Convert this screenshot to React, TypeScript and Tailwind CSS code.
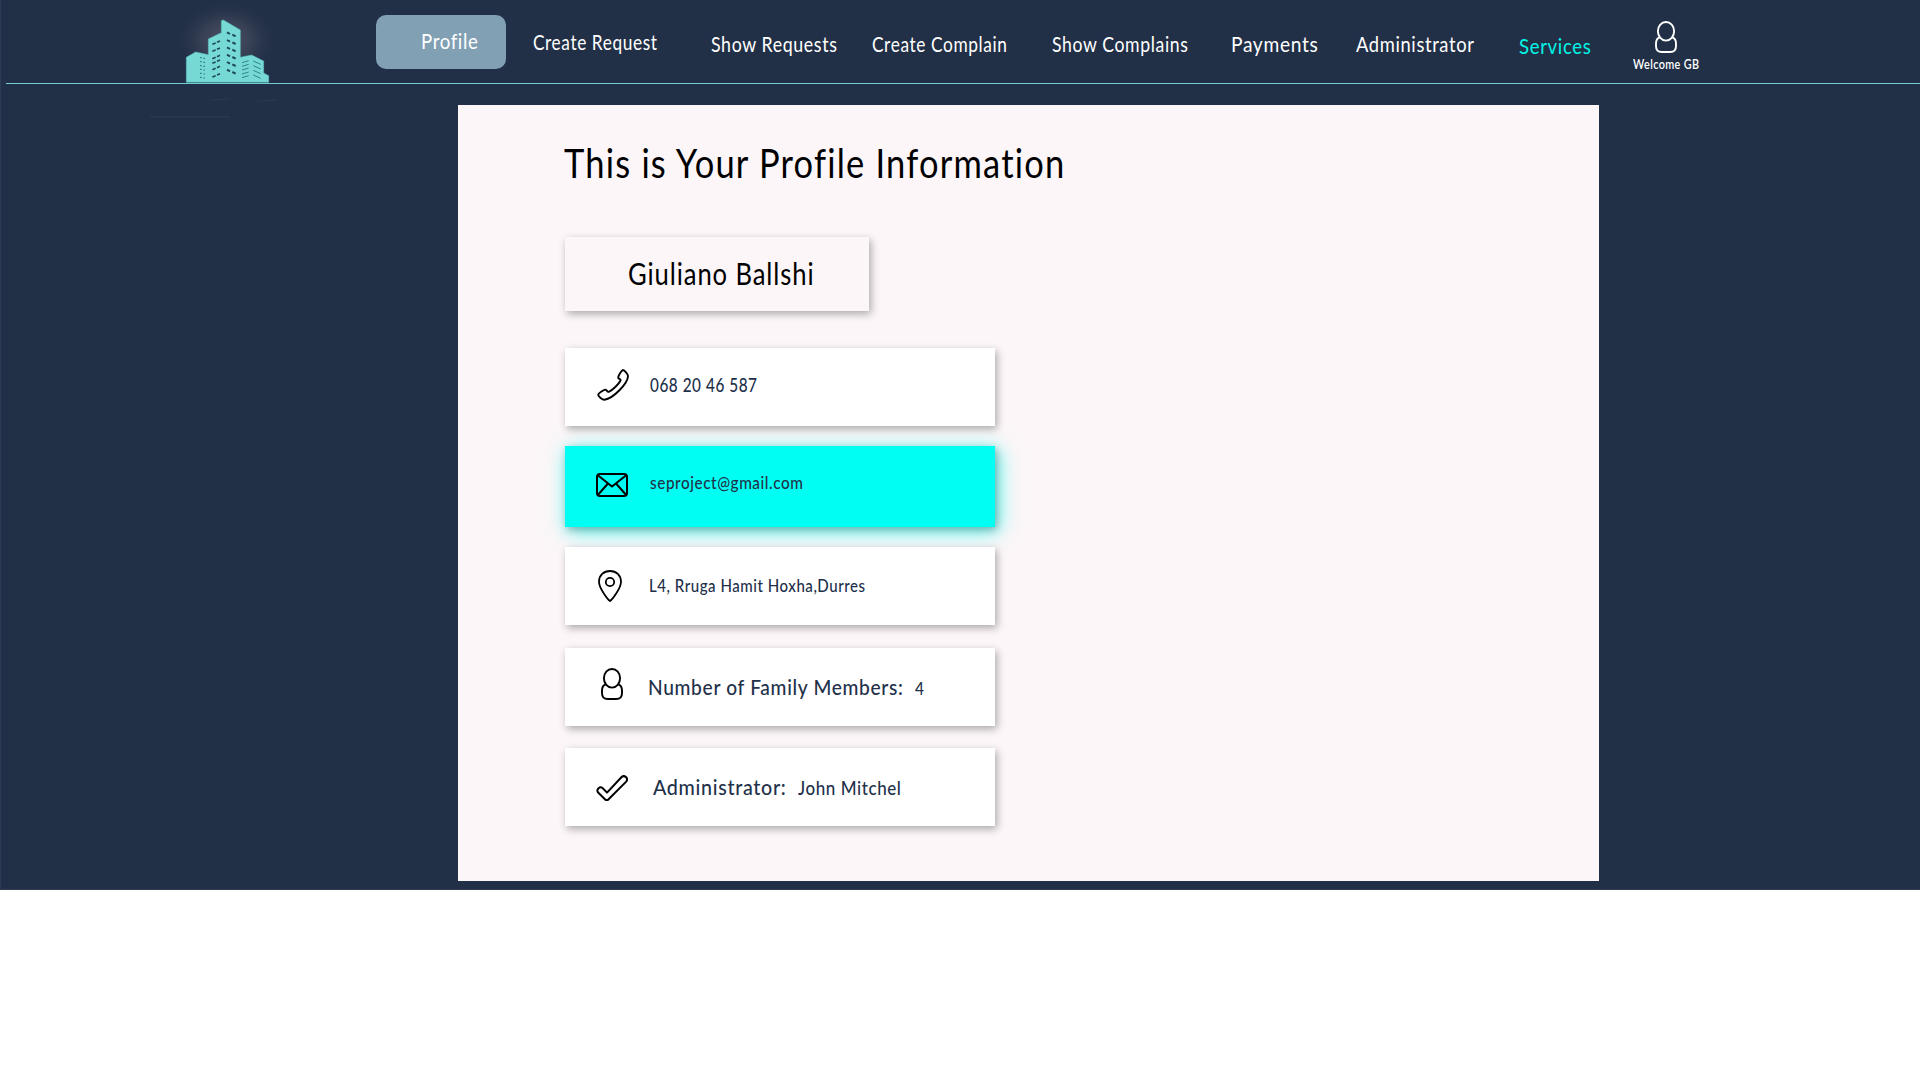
import { useLayoutEffect, useRef, useState } from 'react';
import type { ReactNode } from 'react';

/* Single line of text stretched or squeezed to the width of its box. */
function FitText({ className = '', children }: { className?: string; children: string }) {
  const box = useRef<HTMLDivElement>(null);
  const text = useRef<HTMLSpanElement>(null);
  const [scale, setScale] = useState(1);

  useLayoutEffect(() => {
    if (box.current && text.current && text.current.offsetWidth > 0) {
      setScale((box.current.clientWidth - 1.5) / text.current.getBoundingClientRect().width);
    }
  }, []);

  return (
    <div ref={box} className={`shrink-0 whitespace-nowrap pl-px tracking-[0.035em] ${className}`}>
      <span ref={text} className="inline-block origin-left" style={{ transform: `scaleX(${scale})` }}>
        {children}
      </span>
    </div>
  );
}

function Logo() {
  return (
    <svg viewBox="0 0 600 390" className="h-[130px] w-[200px] shrink-0">
      <defs>
        <radialGradient id="glow">
          <stop offset="0" stopColor="#5b5a6c" stopOpacity="0.85" />
          <stop offset="0.5" stopColor="#474c60" stopOpacity="0.55" />
          <stop offset="1" stopColor="#223047" stopOpacity="0" />
        </radialGradient>
      </defs>
      <ellipse cx="290" cy="120" rx="155" ry="118" fill="url(#glow)" />
      <rect x="0" y="247" width="600" height="143" fill="#223047" />
      <path
        d="M169 247V172L197 156L235 164V117L274 98V62L280 60L331 90V172L365 165L401 183V219L416 227V247Z"
        fill="#77d9d3"
        stroke="#5cc5c4"
        strokeWidth="1.5"
      />
      <g stroke="#1d4a59" strokeWidth="6">
        {[97, 120, 142, 164, 186, 209].map((y) => (
          <path key={y} d={`M291 ${y}l9 5M307 ${y + 7}l10 5`} />
        ))}
        {[133, 154, 176, 190, 209, 231].map((y, i) => (
          <path key={i} strokeWidth="5" d={`M247 ${y}l10 -4M261 ${y - 6}l9 -4`} />
        ))}
      </g>
      <g stroke="#2f8488" strokeWidth="3.5">
        {[173, 185, 197, 208, 220, 232].map((y) => (
          <path key={y} d={`M210 ${y}h5M220 ${y + 2}h5`} />
        ))}
        {[188, 199, 210, 222, 233].map((y) => (
          <path key={y} strokeWidth="3" d={`M336 ${y}l20 -6`} />
        ))}
        {[183, 197, 211, 225].map((y) => (
          <path key={y} strokeWidth="3" d={`M370 ${y}l22 10`} />
        ))}
      </g>
      <path d="M0 250.5H600" stroke="#6fcfd0" strokeWidth="3" />
      <path d="M240 302l60 -6M380 304l60 -4M60 351H300" stroke="#29384f" strokeWidth="4" />
    </svg>
  );
}

function UserIcon({ className = '' }: { className?: string }) {
  return (
    <svg viewBox="0 0 22 32" fill="none" stroke="currentColor" strokeWidth="1.9" className={`h-8 w-[22px] shrink-0 ${className}`}>
      <ellipse cx="11" cy="10.3" rx="8.1" ry="9.3" />
      <path d="M4.6 16.3C2.200 17.200 1 19.500 1 22.500v2.700C1 29 3 31 6.800 31h8.400c3.800 0 5.800-2 5.800-5.800v-2.700c0-3-1.200-5.300-3.600-6.200" />
    </svg>
  );
}

function PhoneIcon() {
  return (
    <svg viewBox="0 0 32 32" fill="none" stroke="currentColor" strokeWidth="1.9" strokeLinejoin="round" className="h-8 w-8">
      <path d="M26 1C27.400 1 31 5.200 31 7C31 14.500 16 29.500 7.500 30.800C5.500 31 1.200 27.500 1.200 25.800C1.300 24.300 7.300 20.400 8.600 20.600C9.800 20.900 10 23.200 11.800 22.900C15.500 21 21.500 15.500 23.600 11.500C24 9.900 21.500 9.900 21.200 8.700C20.800 7.200 24.500 1.400 26 1Z" />
    </svg>
  );
}

function MailIcon() {
  return (
    <svg viewBox="0 0 32 24" fill="none" stroke="currentColor" strokeWidth="2" className="h-6 w-8">
      <rect x="1" y="1" width="30" height="22" rx="3" />
      <path d="M1.800 2.200L16 13.500L30.200 2.200M1.800 22L12 10.500M30.200 22L20 10.500" />
    </svg>
  );
}

function PinIcon() {
  return (
    <svg viewBox="0 0 24 32" fill="none" stroke="currentColor" strokeWidth="1.8" strokeLinejoin="round" className="h-8 w-6">
      <path d="M12 31C10.200 29.700 1 18.500 1 11.700C1 5.300 5.800 1 12 1s11 4.300 11 10.700C23 18.500 13.800 29.700 12 31Z" />
      <circle cx="12" cy="12" r="4.200" />
    </svg>
  );
}

function CheckIcon() {
  return (
    <svg viewBox="0 0 32 26" fill="none" stroke="currentColor" strokeWidth="2" strokeLinejoin="round" className="h-[26px] w-8">
      <path d="M1.900 17.200C.200 14.300 3.800 10.900 6.500 13L11 17.600L25.400 2.200C28.500-.700 32.700 3.300 30.200 6.600L12.600 24.200C11.500 25.300 10 25.300 8.900 24.200Z" />
    </svg>
  );
}

const cardShadow = 'shadow-[2px_3px_8px_rgba(0,0,0,0.32)]';

function Card({ className = '', children }: { className?: string; children: ReactNode }) {
  return <div className={`flex w-[430px] items-start text-[#22304a] ${className}`}>{children}</div>;
}

function Icon({ className = '', children }: { className?: string; children: ReactNode }) {
  return <div className={`w-8 shrink-0 text-black ${className}`}>{children}</div>;
}

export default function App() {
  return (
    <div className="h-[1080px] w-[1920px] overflow-hidden bg-white font-['Lato',sans-serif] [font-variant-ligatures:none]">
      <div className="h-[890px] border-b border-l border-b-[#323b58] border-l-[#2d3b55] bg-[#223047]">
        <header className="flex h-[84px] items-start text-[22px] leading-8 text-white">
          <div className="mt-[83px] h-px w-[129px] shrink-0 pl-[5px]">
            <div className="h-px bg-[#6fcfd0]" />
          </div>
          <Logo />
          <div className="flex h-[84px] w-[1590px] shrink-0 items-start border-b border-[#6fcfd0]">
            <div className="ml-[46px] mt-[15px] h-[54px] w-[130px] shrink-0 rounded-[10px] bg-[#81a0b4] pl-11 pt-[10px]">
              <FitText className="w-[59px]">Profile</FitText>
            </div>
            <FitText className="ml-[26px] mt-[26px] w-[126px]">Create Request</FitText>
            <FitText className="ml-[52px] mt-[28px] w-[128px]">Show Requests</FitText>
            <FitText className="ml-[33px] mt-[28px] w-[137px]">Create Complain</FitText>
            <FitText className="ml-[43px] mt-[28px] w-[138px]">Show Complains</FitText>
            <FitText className="ml-[41px] mt-[28px] w-[89px]">Payments</FitText>
            <FitText className="ml-[36px] mt-[28px] w-[120px]">Administrator</FitText>
            <FitText className="ml-[43px] mt-[30px] w-[74px] text-[#00f5e6]">Services</FitText>
            <div className="ml-[40px] mt-[21px] flex w-[68px] flex-col items-center">
              <UserIcon />
              <FitText className="mt-[3px] w-[68px] text-[13.5px] font-semibold leading-4">Welcome GB</FitText>
            </div>
          </div>
        </header>

        <main className="ml-[457px] mt-[21px] h-[776px] w-[1141px] bg-[#fcf6f8] pl-[107px] pt-[34px] text-black">
          <FitText className="-ml-[2px] w-[503px] text-[40px] leading-[48px]">This is Your Profile Information</FitText>

          <div className={`mt-[50px] h-[74px] w-[304px] bg-[#fcf6f8] pl-[62px] pt-[16px] ${cardShadow}`}>
            <FitText className="w-[188px] text-[30px] leading-10">Giuliano Ballshi</FitText>
          </div>

          <Card className={`mt-[37px] h-[78px] bg-white ${cardShadow}`}>
            <Icon className="ml-[32px] mt-[21px]"><PhoneIcon /></Icon>
            <FitText className="ml-[20px] mt-[25px] w-[109px] text-[18.5px] font-medium leading-6">068 20 46 587</FitText>
          </Card>

          <Card className="mt-5 h-[81px] bg-[#00fff2] shadow-[2px_3px_8px_rgba(0,0,0,0.28),3px_4px_20px_rgba(0,255,242,0.7)]">
            <Icon className="ml-[31px] mt-[27px]"><MailIcon /></Icon>
            <FitText className="ml-[21px] mt-[24px] w-[155px] text-[18px] font-medium leading-6">seproject@gmail.com</FitText>
          </Card>

          <Card className={`relative mt-5 h-[78px] bg-white ${cardShadow}`}>
            <Icon className="ml-[33px] mt-[23px]"><PinIcon /></Icon>
            <FitText className="ml-[18px] mt-[26px] w-[218px] text-[18px] font-medium leading-6">L4, Rruga Hamit Hoxha,Durres</FitText>
          </Card>

          <Card className={`mt-[23px] h-[78px] bg-white ${cardShadow}`}>
            <Icon className="ml-[36px] mt-[20px]"><UserIcon /></Icon>
            <FitText className="ml-[14px] mt-[23px] w-[257px] text-[22px] font-medium leading-8">Number of Family Members:</FitText>
            <FitText className="ml-[10px] mt-[28px] w-[11px] text-[18px] font-medium leading-6">4</FitText>
          </Card>

          <Card className={`mt-[22px] h-[78px] bg-white ${cardShadow}`}>
            <Icon className="ml-[31px] mt-[27px]"><CheckIcon /></Icon>
            <FitText className="ml-[24px] mt-[23px] w-[135px] text-[22px] font-medium leading-8">Administrator:</FitText>
            <FitText className="ml-[10px] mt-[28px] w-[105px] text-[19px] font-medium leading-6">John Mitchel</FitText>
          </Card>
        </main>
      </div>
    </div>
  );
}
